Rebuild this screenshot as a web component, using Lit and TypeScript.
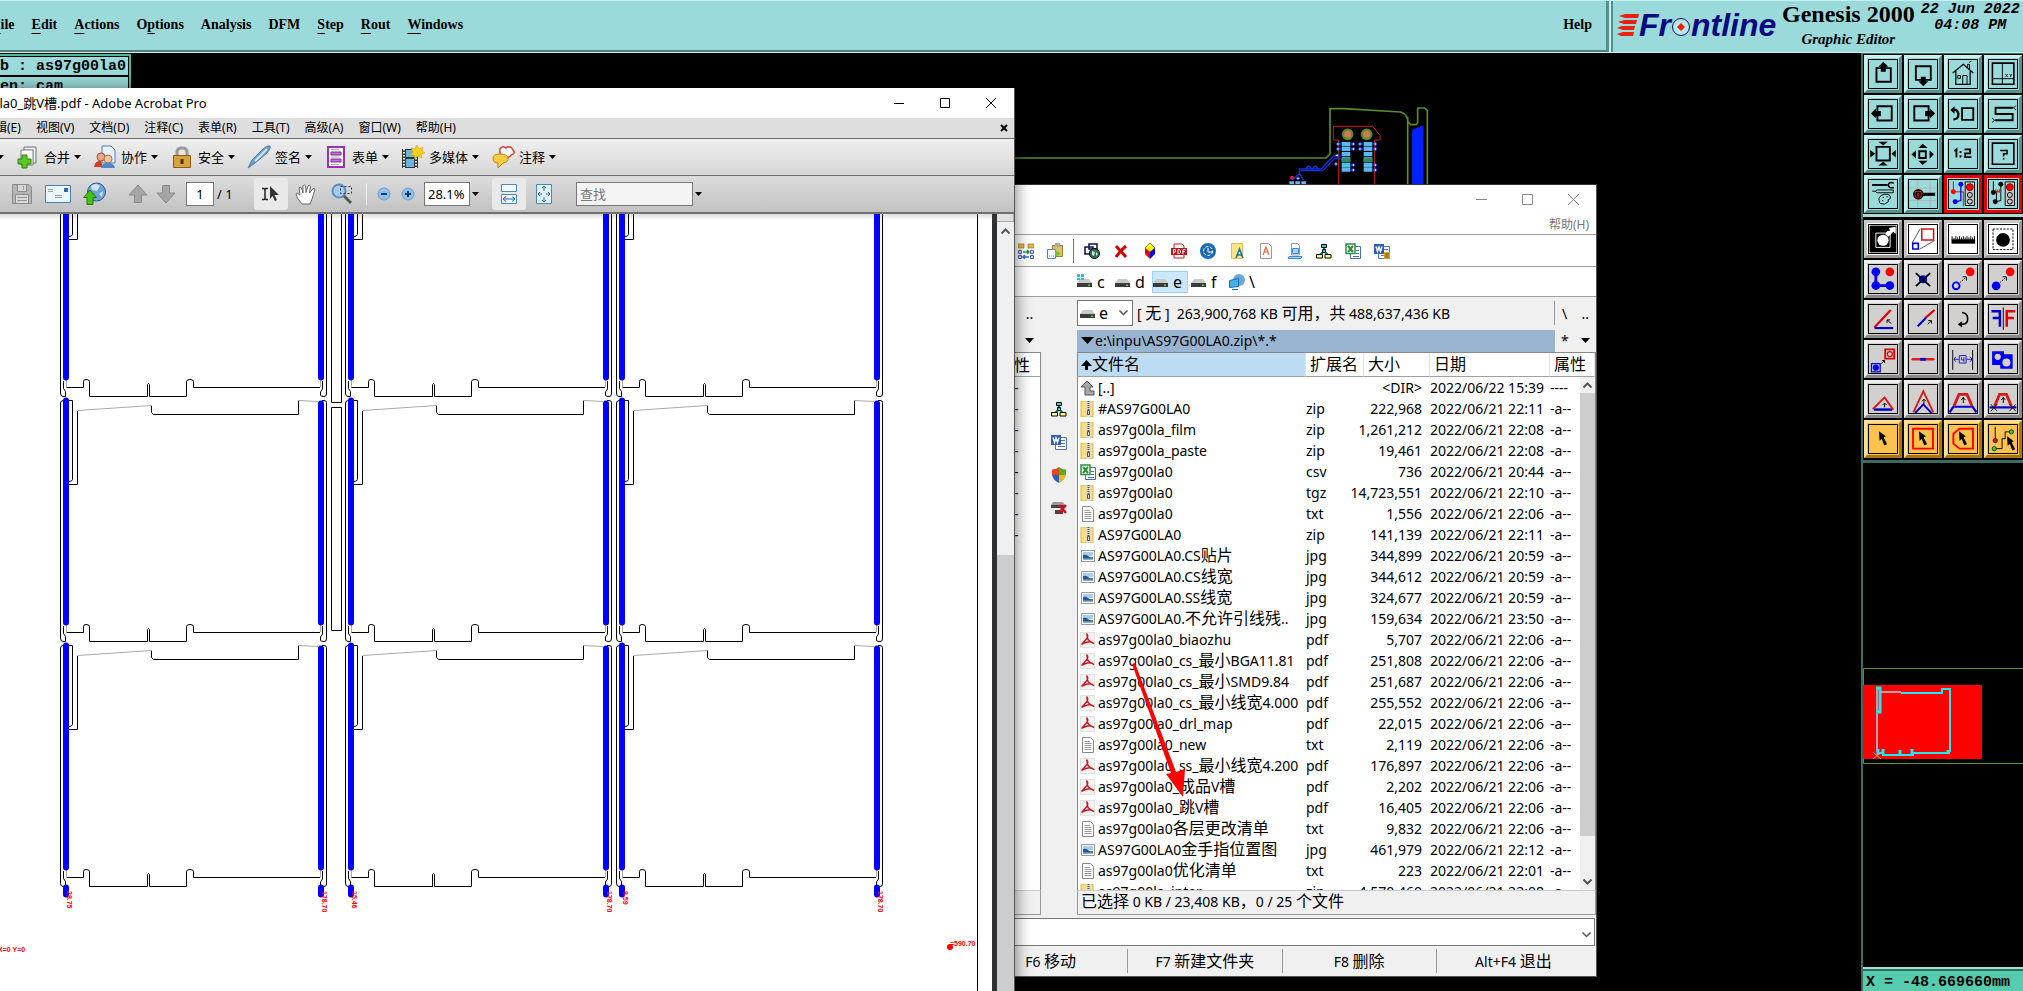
import { LitElement, html, svg, css } from "lit";
import { customElement } from "lit/decorators.js";

/** Wraps runs of Chinese characters so that they can be set a size larger than the Latin text. */
const han = (s: string) =>
  s.split(/([\u3000-\u9fff\uff00-\uffef]+)/).map((p, i) => (i % 2 ? html`<span class="han">${p}</span>` : p));

const caret = html`<svg class="caret" width="7" height="4" viewBox="0 0 7 4"><path d="M0 0H7L3.500 4Z" fill="#000" /></svg>`;

/* ---------- Genesis tool palette ---------- */

const cursor = (x: number, y: number) =>
  svg`<path transform="translate(${x} ${y})" fill="#000" stroke="none" d="M0 0L22 16L15 20L26 42L17 46L9 25L2 31Z"/>`;

const viewTools: [string, unknown][] = [
  ["Pan up", svg`<path stroke-width="6" d="M24 26H70V70H24Z"/><path fill="#000" stroke="none" d="M46 6L62 22H54V38H38V22H30Z"/>`],
  ["Pan down", svg`<path stroke-width="6" d="M22 20H70V64H22Z"/><path fill="#000" stroke="none" d="M46 84L62 68H54V54H38V68H30Z"/>`],
  ["Home view", svg`<path stroke-width="4" d="M12 42L46 14L78 42M22 36V78H68V36"/><path stroke-width="3" d="M60 24V14H66V30M64 8L72 4M44 78V50H58V78M28 50H37V59H28Z"/>`],
  ["Coordinates", svg`<path stroke-width="5" d="M11 10H80V78H11Z"/><path stroke-width="3" d="M43 10V78M11 60H80"/><path stroke-width="2.500" d="M53 45L60 55M60 45L53 55M66 45L70 50L74 45M70 50V55"/>`],
  ["Pan left", svg`<path stroke-width="6" d="M27 20H73V66H27Z"/><path fill="#000" stroke="none" d="M6 43L22 27V35H38V52H22V59Z"/>`],
  ["Pan right", svg`<path stroke-width="6" d="M17 20H63V66H17Z"/><path fill="#000" stroke="none" d="M84 43L68 27V35H52V52H68V59Z"/>`],
  ["Previous view", svg`<path stroke-width="6" d="M42 26H78V64H42Z"/><path stroke-width="7" d="M10 32H22Q32 40 30 50Q28 62 14 62"/><path fill="#000" stroke="none" d="M4 32L18 20V44Z"/>`],
  ["Serpentine", svg`<path stroke-width="6" d="M78 25H21V45H76V65H20"/><path stroke-width="3" d="M80 25L86 18M80 25L86 32M18 65L10 58M18 65L10 72"/>`],
  ["Zoom in", svg`<path stroke-width="6" d="M24 22H67V66H24Z"/><path fill="#000" stroke="none" d="M46 18L30 6H60ZM46 70L30 82H60ZM20 44L4 32V56ZM72 44L86 32V56Z"/>`],
  ["Zoom out", svg`<path stroke-width="6" d="M33 36H54V58H33Z"/><path fill="#000" stroke="none" d="M44 12L60 26H30ZM44 80L60 67H30ZM8 46L22 34V60ZM80 46L66 34V60Z"/>`],
  ["Scale one to two", svg`<path stroke-width="6" d="M24 56V30L17 35M37 35V42M37 49V56M50 30H68V43H52V55H72"/>`],
  ["Help", svg`<path stroke-width="5" d="M11 10H80V78H11Z"/><path stroke-width="5" d="M36 34H58V44H47V53M47 58V63"/>`],
  ["Setup", svg`<path stroke-width="6" d="M10 16H60"/><path stroke-width="5" d="M80 10Q64 4 62 16Q64 28 80 24"/><path stroke-width="3" d="M10 36H20L26 32H78V41H26L20 36M32 66Q30 50 50 46Q72 44 68 60Q58 62 62 70Q50 82 38 76Q30 72 34 66M44 56H48M56 54H60M42 66H46"/>`],
  ["Measure", svg`<path stroke="#c89aa0" stroke-width="2" d="M28 2V88M68 2V88M2 26H88M2 66H88"/><circle cx="30" cy="46" r="17" fill="#000" stroke="none"/><path stroke-width="10" d="M40 46H84"/><path stroke="#e02020" stroke-width="3" d="M20 37H39V55H20ZM27 44H32V49H27Z"/>`],
  ["Net check", svg`<path stroke="#e00000" stroke-width="3" d="M14 4V38H46V84"/><path stroke="#0000e0" stroke-width="4" d="M38 14V66L20 70"/><circle cx="14" cy="38" r="8" fill="#f00" stroke="none"/><circle cx="38" cy="14" r="8" fill="#00f" stroke="none"/><circle cx="20" cy="70" r="8" fill="#00f" stroke="none"/><path stroke-width="3" fill="#c8c8c8" d="M52 6H82V82H52Z"/><circle cx="67" cy="23" r="11" fill="#f00" stroke="#700" stroke-width="3"/><circle cx="67" cy="48" r="8" stroke-width="3"/><circle cx="67" cy="69" r="8" stroke-width="3"/>`],
  ["Net highlight", svg`<path stroke-width="3" d="M14 4V38H24V66M38 14V66L20 70"/><path stroke="#e00000" stroke-width="3" d="M20 38H34M22 30V40M28 30V40M34 30V40"/><circle cx="14" cy="40" r="8" fill="#000" stroke="none"/><circle cx="38" cy="14" r="8" fill="#000" stroke="none"/><circle cx="20" cy="70" r="8" fill="#000" stroke="none"/><path stroke-width="3" fill="#c8c8c8" d="M52 6H82V82H52Z"/><circle cx="67" cy="23" r="11" fill="#f00" stroke="#700" stroke-width="3"/><circle cx="67" cy="48" r="8" stroke-width="3"/><circle cx="67" cy="69" r="8" stroke-width="3"/>`],
];

const editTools: [string, unknown][] = [
  ["Feature inspect", svg`<path fill="#000" stroke="none" d="M2 2H88V88H2Z"/><path stroke="#fff" stroke-width="3" d="M22 26H68V72H22Z"/><circle cx="45" cy="49" r="18" fill="#fff" stroke="none"/><path fill="#fff" stroke="none" d="M58 20L68 18L64 10L86 6V28L78 22L62 38L52 30Z"/>`],
  ["Zoom window", svg`<path stroke-width="2" d="M10 58L36 12M34 78L82 50"/><path stroke="#c81818" stroke-width="5" d="M41 13H79V48H41Z"/><path stroke="#0000e0" stroke-width="5" d="M12 59H30V77H12Z"/>`],
  ["Ruler", svg`<path fill="#000" stroke="none" d="M8 46H84V60H8Z"/><path stroke-width="3" d="M10 36V48M16 42V48M22 36V48M28 40V48M34 36V48M40 40V48M46 36V48M52 40V48M58 36V48M64 40V48M70 36V48M76 40V48M82 36V48"/>`],
  ["Pad select", svg`<path stroke-width="3" stroke-dasharray="7 4" d="M13 13H77V79H13Z"/><circle cx="45" cy="48" r="22" fill="#000" stroke="none"/>`],
  ["Connect pads", svg`<g stroke="none" fill="#0000f0"><circle cx="22" cy="22" r="14"/><circle cx="22" cy="66" r="14"/><circle cx="67" cy="66" r="14"/><circle cx="67" cy="22" r="14" fill="#f00"/></g><path stroke="#0000f0" stroke-width="9" d="M22 22V66H67"/>`],
  ["Delete feature", svg`<circle cx="45" cy="46" r="13" fill="#0000f0" stroke="none"/><path stroke-width="6" d="M22 26L68 68M68 26L22 68"/>`],
  ["Move pad", svg`<circle cx="23" cy="67" r="11" stroke="#0000f0" stroke-width="6"/><circle cx="68" cy="22" r="14" fill="#f00" stroke="none"/><path stroke-width="3" stroke-dasharray="5 3" d="M36 56L54 40"/><path stroke-width="3" d="M44 38H56V50"/>`],
  ["Copy pad", svg`<circle cx="23" cy="67" r="14" fill="#0000f0" stroke="none"/><circle cx="68" cy="22" r="14" fill="#f00" stroke="none"/><path stroke-width="3" stroke-dasharray="5 3" d="M36 56L54 40"/><path stroke-width="3" d="M44 38H56V50"/>`],
  ["Rotate line", svg`<path stroke="#e00000" stroke-width="7" d="M17 72L70 16"/><path stroke="#0000d0" stroke-width="7" d="M18 74H78"/><path stroke-width="3" d="M72 60L58 48M58 58V48H68"/>`],
  ["Extend line", svg`<path stroke="#e00000" stroke-width="7" d="M52 42L82 16"/><path stroke="#0000d0" stroke-width="7" d="M28 68L54 42"/><path stroke-width="3" d="M60 62L70 52M62 50H72V60"/>`],
  ["Rotate", svg`<path stroke-width="5" d="M42 24Q60 26 60 44Q60 62 42 62H34"/><path fill="#000" stroke="none" d="M28 62L42 52V72Z"/>`],
  ["Mirror", svg`<path stroke-width="3" d="M46 8V80"/><path stroke="#0000d0" stroke-width="8" d="M8 20H35V70M35 42H12"/><path stroke="#e00000" stroke-width="8" d="M84 20H57V70M57 42H80"/>`],
  ["Change symbol", svg`<path stroke="#e00000" stroke-width="6" d="M52 14H81V44H52Z"/><circle cx="67" cy="29" r="8" stroke="#e00000" stroke-width="4"/><path stroke="#0000d0" stroke-width="4" d="M8 60H36V86H8Z"/><circle cx="22" cy="73" r="10" fill="#0000f0" stroke="none"/><path stroke-width="3" d="M40 60L50 50M42 50H50V58"/>`],
  ["Merge line", svg`<path stroke="#e02020" stroke-width="8" stroke-linecap="round" d="M12 46H78"/><path stroke="#0000d0" stroke-width="9" d="M36 46H54"/>`],
  ["Spacing", svg`<path stroke-width="3" d="M12 16V80M76 16V80"/><path stroke="#1818c8" stroke-width="3" d="M16 46H32M56 46H74M22 38L16 46L22 54M68 38L74 46L68 54M33 34H55V58H33ZM40 39V48H48M48 39V54"/>`],
  ["Contour merge", svg`<path fill="#0000f0" stroke="none" d="M10 20H48V30H76V76H36V64H10Z"/><circle cx="28" cy="38" r="10" fill="#d4d0d0" stroke="none"/><circle cx="56" cy="56" r="13" fill="#d4d0d0" stroke="none"/>`],
  ["Taper one", svg`<path stroke="#0000d0" stroke-width="8" d="M16 79H74"/><path stroke="#d81818" stroke-width="6" d="M12 78L50 40L78 80"/><path stroke-width="3" d="M50 72V58M44 64L50 58L56 64"/>`],
  ["Taper two", svg`<path stroke="#d81818" stroke-width="6" d="M14 88L46 20L78 88"/><path stroke="#0000d0" stroke-width="6" d="M20 90L46 62L72 90"/><path stroke-width="3" d="M48 62V46M42 52L48 46L54 52"/>`],
  ["Trapezoid", svg`<path stroke="#0000d0" stroke-width="7" d="M2 88L14 70H76L88 88"/><path stroke="#d81818" stroke-width="9" d="M16 68L32 30H58L74 68"/><path stroke-width="3" d="M46 58V40M40 48L46 40L52 48"/>`],
  ["Trapezoid cut", svg`<path stroke="#0000d0" stroke-width="7" d="M2 72H88"/><path stroke="#d81818" stroke-width="9" d="M18 68L34 30H56L72 68"/><path stroke-width="3" d="M46 58V40M40 48L46 40L52 48M6 62L26 84M26 62L6 84M66 62L86 84M86 62L66 84"/>`],
  ["Select", cursor(32, 20)],
  ["Select in frame", svg`<path stroke="#f00" stroke-width="6" d="M13 12H77V76H13Z"/>${cursor(32, 20)}`],
  ["Select in polygon", svg`<path stroke="#f00" stroke-width="6" d="M34 12H77V76H34L14 60V28Z"/>${cursor(32, 20)}`],
  ["Select net", svg`<path stroke-width="3" d="M20 6V44M18 76H42V44H52V22H70"/><g stroke-width="2"><circle cx="20" cy="50" r="7" fill="#d01010"/><circle cx="17" cy="76" r="7" fill="#20d020"/><circle cx="72" cy="22" r="7" fill="#20d020"/></g>${cursor(58, 36)}`],
];

/* ---------- Shared 16px glyphs ---------- */

const tree = svg`<path d="M8 4V8L4 12M8 8L12 12" stroke="#00806a" stroke-width="2"/><path fill="#30d0d0" stroke="#000" d="M5.500 1.500H10.500V4.500H5.500ZM6.500 6.500H9.500V9.500H6.500Z"/><path fill="#ffff80" stroke="#000" d="M.500 11.500H6.500V15H.500ZM9 11.500H15V15H9Z"/>`;
const word = svg`<path fill="#fff" stroke="#4a78c0" d="M7.500 3.500H15.500V15.500H4.500V11"/><path stroke="#4a78c0" d="M10 6.500H14M10 9.500H14M7 12.500H14"/><path fill="#2b5eb4" d="M0 1H10V11H0Z"/><path stroke="#fff" stroke-width="1.400" d="M2 3.500L3.500 8.500L5 4L6.500 8.500L8 3.500"/>`;
const excel = svg`<path fill="#fff" stroke="#4070b0" d="M8.500 3.500H15.500V15.500H5.500V11"/><path stroke="#4070b0" d="M11 7.500H14M11 10.500H14M8 13.500H14"/><path fill="#fff" stroke="#2e8b40" stroke-width="1.500" d="M1 1H10V10.500H1Z"/><path stroke="#2e8b40" stroke-width="2" d="M3 3L8 9M8 3L3 9"/>`;
const drive = svg`<path fill="#c9c9c9" d="M3 5H12L15 9H0Z"/><path fill="#3b3b3b" d="M0 9H15V13H0Z"/><path fill="#3fe04a" d="M11 10.500H13V12H11Z"/>`;

const fileIcons: Record<string, unknown> = {
  up: svg`<path d="M7 1L13 7H10V11H14V15H5V7H1Z" fill="#a8a8a8" stroke="#555"/>`,
  zip: svg`<path d="M1 0H13V16H1Z" fill="#f7dd85"/><path d="M1 0H13V16H1Z" stroke="#d9b64c"/><path d="M6.500 0H10.500V16H6.500Z" fill="#d8d8d8"/><path d="M8.500 0V9" stroke="#555" stroke-width="2" stroke-dasharray="1 1"/><path d="M7.500 9.500H9.500V13.500H7.500Z" stroke="#555"/>`,
  xls: excel,
  txt: svg`<path d="M2.500 .500H10.500L13.500 3.500V15.500H2.500Z" fill="#fff" stroke="#8a8a8a"/><path d="M4.500 4.500H10M4.500 6.500H11.500M4.500 8.500H11.500M4.500 10.500H11.500M4.500 12.500H11.500" stroke="#999"/>`,
  jpg: svg`<path d="M1.500 2.500H14.500V13.500H1.500Z" fill="#fff" stroke="#999"/><path d="M3 4H13V8H3Z" fill="#a8ccf0"/><path d="M3 12V7Q6 6 8 8T13 9V12Z" fill="#27598c"/><path d="M3 10.500H13V12H3Z" fill="#88b0d8"/>`,
  pdf: svg`<path d="M.500 .500H14.500V15.500H.500Z" fill="#f4f2f2" stroke="#e3e0e0"/><path d="M6.500 1.500Q9 4 6.500 7T1.500 12.500Q4 11 7.500 10T14 11.500Q11 10 9 8.500T7 2" stroke="#c8141c" stroke-width="1.400"/>`,
};

const glyph = (g: unknown, size = 16) =>
  html`<svg class="glyph" width=${size} height=${size} viewBox="0 0 16 16" fill="none">${g}</svg>`;

/* ---------- Data ---------- */

const files: [string, string, string, string, string, string][] = [
  ["up", "[..]", "", "<DIR>", "2022/06/22 15:39", "----"],
  ["zip", "#AS97G00LA0", "zip", "222,968", "2022/06/21 22:11", "-a--"],
  ["zip", "as97g00la_film", "zip", "1,261,212", "2022/06/21 22:08", "-a--"],
  ["zip", "as97g00la_paste", "zip", "19,461", "2022/06/21 22:08", "-a--"],
  ["xls", "as97g00la0", "csv", "736", "2022/06/21 20:44", "-a--"],
  ["zip", "as97g00la0", "tgz", "14,723,551", "2022/06/21 22:10", "-a--"],
  ["txt", "as97g00la0", "txt", "1,556", "2022/06/21 22:06", "-a--"],
  ["zip", "AS97G00LA0", "zip", "141,139", "2022/06/21 22:11", "-a--"],
  ["jpg", "AS97G00LA0.CS贴片", "jpg", "344,899", "2022/06/21 20:59", "-a--"],
  ["jpg", "AS97G00LA0.CS线宽", "jpg", "344,612", "2022/06/21 20:59", "-a--"],
  ["jpg", "AS97G00LA0.SS线宽", "jpg", "324,677", "2022/06/21 20:59", "-a--"],
  ["jpg", "AS97G00LA0.不允许引线残..", "jpg", "159,634", "2022/06/21 23:50", "-a--"],
  ["pdf", "as97g00la0_biaozhu", "pdf", "5,707", "2022/06/21 22:06", "-a--"],
  ["pdf", "as97g00la0_cs_最小BGA11.81", "pdf", "251,808", "2022/06/21 22:06", "-a--"],
  ["pdf", "as97g00la0_cs_最小SMD9.84", "pdf", "251,687", "2022/06/21 22:06", "-a--"],
  ["pdf", "as97g00la0_cs_最小线宽4.000", "pdf", "255,552", "2022/06/21 22:06", "-a--"],
  ["pdf", "as97g00la0_drl_map", "pdf", "22,015", "2022/06/21 22:06", "-a--"],
  ["txt", "as97g00la0_new", "txt", "2,119", "2022/06/21 22:06", "-a--"],
  ["pdf", "as97g00la0_ss_最小线宽4.200", "pdf", "176,897", "2022/06/21 22:06", "-a--"],
  ["pdf", "as97g00la0_成品V槽", "pdf", "2,202", "2022/06/21 22:06", "-a--"],
  ["pdf", "as97g00la0_跳V槽", "pdf", "16,405", "2022/06/21 22:06", "-a--"],
  ["txt", "as97g00la0各层更改清单", "txt", "9,832", "2022/06/21 22:06", "-a--"],
  ["jpg", "AS97G00LA0金手指位置图", "jpg", "461,979", "2022/06/21 22:12", "-a--"],
  ["txt", "as97g00la0优化清单", "txt", "223", "2022/06/21 22:01", "-a--"],
  ["zip", "as97g00la_inter", "zip", "4,570,460", "2022/06/21 22:08", "-a--"],
];

/* ---------- Graphic editor: side palette ---------- */

@customElement("tool-palette")
export class ToolPalette extends LitElement {
  static styles = css`
    :host { display: flex; flex-direction: column; min-height: 0; border-left: 2px solid #3d6b64; background: #000; }
    .grid { display: grid; grid-template-columns: repeat(4, 38px); gap: 2px; padding: 1px 0 1px 1px; border-top: 1px solid #3d6b64; }
    .second { padding-top: 3px; padding-bottom: 2px; border-top: 3px solid #a9dcd6; border-bottom: 3px solid #3d6b64; }
    .tool { box-sizing: border-box; width: 38px; height: 38px; margin: 0; padding: 0; display: grid; place-items: center;
      border: 3px solid; border-color: #c4f2f0 #55908e #55908e #c4f2f0; background: #9adada; }
    .tool svg { display: block; width: 28px; height: 28px; border: 1px solid #000; }
    .tool.alert { border-color: #e60000; }
    .grey { background: #d2cfcf; border-color: #eee #8a8888 #8a8888 #eee; }
    .white { background: #fff; border-color: #c8c6c6 #9a9898 #9a9898 #c8c6c6; }
    .orange { background: #fdc14e; border-color: #ffdf9a #a87418 #a87418 #ffdf9a; }
    .map { flex: 1; min-height: 0; position: relative; }
    .map svg { position: absolute; left: 0; top: 205px; }
    .coord { box-sizing: border-box; height: 24px; padding: 4px 0 0 3px; border-top: 2px solid #a9dcd6;
      background: #55ccad; box-shadow: inset 0 2px #2f6f60; font: bold 15px/20px "Liberation Mono", monospace; white-space: pre; }
  `;
  private tool(name: string, icon: unknown, kind: string) {
    return html`<button class="tool ${kind}" aria-label=${name}>
      <svg viewBox="0 0 90 90" fill="none" stroke="#000">${icon}</svg>
    </button>`;
  }
  render() {
    return html`
      <div class="grid">${viewTools.map(([n, i], k) => this.tool(n, i, k > 13 ? "alert" : ""))}</div>
      <div class="grid second">${editTools.map(([n, i], k) => this.tool(n, i, k < 4 ? "white" : k < 20 ? "grey" : "orange"))}</div>
      <div class="map">
        <svg width="160" height="96" viewBox="0 0 160 96" fill="none">
          <path d="M160 .500H.500V95.500H160" stroke="#5a8c2a" />
          <path d="M0 17H119V91H0Z" fill="#f00" />
          <path d="M14 21V84" stroke="#a8a8a8" stroke-width="2" />
          <path d="M18 24H38" stroke="#b8a0a0" stroke-width="2" />
          <path d="M38 25H79V21H87V84M87 85H50V87H20V85H14" stroke="#20e8f0" stroke-width="2" />
          <path d="M13 20H17V44H13M17 24V44" stroke="#20e8f0" stroke-width="3" />
          <path d="M37 87V82M49 86V81M20 86V81M85 82V86M15 81V87" stroke="#20e8f0" stroke-width="3" />
          <path d="M10 91L18 84M10 84L18 91" stroke="#c8a0a0" />
        </svg>
      </div>
      <div class="coord">X = -48.669660mm</div>
    `;
  }
}

/* ---------- File manager window ---------- */

@customElement("file-manager")
export class FileManager extends LitElement {
  static styles = css`
    :host { display: flex; flex-direction: column; box-sizing: border-box; overflow: hidden; background: #f0f0f0; color: #000;
      font: 14px/21px "Noto Sans", "Noto Sans CJK SC", sans-serif; border-right: 1px solid #555; border-bottom: 1px solid #555; border-top: 1px solid #333; }
    .han { font-size: 16px; }
    button { font: inherit; color: inherit; margin: 0; padding: 0; border: 0; background: none; }
    .glyph { display: block; flex: none; }
    .title { display: flex; justify-content: flex-end; height: 28px; background: #fff; }
    .title button { width: 46px; display: grid; place-items: center; }
    .menu { display: flex; justify-content: flex-end; height: 21px; padding-right: 7px; background: #fff; border-bottom: 1px solid #a0a0a0; font-size: 12px; line-height: 24px; color: #777; }
    .tools { display: flex; align-items: center; gap: 13px; height: 31px; padding-left: 4px; background: #fff; border-bottom: 1px solid #a0a0a0; }
    .rule { width: 1px; height: 24px; margin: 0 -3px; background: #777; }
    .drives { display: flex; align-items: center; height: 29px; padding-left: 62px; background: #fff; border-bottom: 1px solid #a0a0a0; gap: 2px; font-size: 16px; }
    .drives button { box-sizing: border-box; height: 22px; width: 36px; display: flex; align-items: center; gap: 4px; border: 1px solid transparent; line-height: 20px; }
    .drives .on { background: #cce8ff; border-color: #99d1ff; }
    .body { flex: 1; min-height: 0; display: grid; grid-template-columns: 27px 36px 1fr; }
    .left, .right { display: flex; flex-direction: column; min-height: 0; min-width: 0; }
    .space { height: 32px; display: flex; align-items: center; gap: 4px; }
    .left .space, .left .path { justify-content: center; padding-left: 4px; }
    .path { height: 23px; display: flex; align-items: center; }
    .list { flex: 1; min-height: 0; position: relative; overflow: hidden; background: #fff; border: 1px solid #888; border-bottom: 0; }
    .left .list { border-left: 0; }
    .cutHead { height: 23px; border-bottom: 1px solid #a0a0a0; line-height: 24px; }
    .dashes { white-space: pre; }
    .dashes div { height: 21px; }
    .status { height: 25px; box-sizing: border-box; border: 1px solid #999; border-top-color: #ccc; padding-left: 3px; line-height: 21px; margin-bottom: 3px; white-space: nowrap; }
    .left .status { border-left: 0; }
    .mid { display: flex; flex-direction: column; align-items: center; gap: 17px; padding-top: 104px; }
    .combo { position: relative; display: flex; align-items: center; }
    .combo select { appearance: none; box-sizing: border-box; width: 56px; height: 26px; padding: 0 0 0 21px; border: 1px solid #777; border-radius: 0; background: #fff; font: inherit; font-size: 16px; color: #000; }
    .combo .glyph { position: absolute; left: 3px; }
    .combo .chev { position: absolute; right: 5px; }
    .free { flex: 1; white-space: nowrap; }
    .side { width: 41px; display: flex; justify-content: space-around; align-items: center; height: 24px; }
    .space .side { border-left: 1px solid #999; }
    .current { flex: 1; height: 22px; display: flex; align-items: center; gap: 1px; padding-left: 4px; background: #99b4d1; }
    table { border-collapse: separate; border-spacing: 0; table-layout: fixed; width: 100%; }
    th { height: 23px; padding: 0 0 0 4px; border-bottom: 1px solid #a0a0a0; border-right: 1px solid #e2e2e2; text-align: left; font-weight: normal; font-size: 16px; line-height: 23px; }
    th:first-child { background: #bcdcf4; padding-left: 3px; }
    td { height: 21px; padding: 0; white-space: nowrap; }
    .name { display: flex; align-items: center; gap: 2px; padding-left: 2px; height: 21px; }
    .num { display: flex; justify-content: flex-end; padding-right: 8px; }
    .cName { width: 228px; } .cExt { width: 58px; } .cSize { width: 66px; } .cDate { width: 120px; }
    .scroll { position: absolute; right: 0; top: 24px; bottom: 0; width: 15px; display: flex; flex-direction: column; background: #f0f0f0; }
    .scroll svg { display: block; margin: 5px auto; }
    .thumb { flex: 1; margin-bottom: 54px; background: #cdcdcd; }
    .scroll .down { position: absolute; bottom: 0; left: 3px; }
    .command { display: flex; align-items: center; box-sizing: border-box; height: 28px; margin-right: 1px; background: #fff; border: 1px solid #777; border-left: 0; }
    .command input { flex: 1; min-width: 0; border: 0; outline: 0; background: none; font: inherit; }
    .command button { width: 16px; }
    .keys { display: flex; align-items: center; height: 30px; margin-left: -40px; padding-right: 6px; }
    .keys button { flex: 1; height: 24px; border-right: 1px solid #999; white-space: nowrap; }
    .keys button:last-child { border: 0; }
  `;
  render() {
    const chev = html`<svg class="chev" width="9" height="6" viewBox="0 0 9 6" fill="none"><path d="M.500 .500L4.500 4.500L8.500 .500" stroke="#555" stroke-width="1.500" /></svg>`;
    return html`
      <div class="title">
        <button aria-label="Minimise"><svg width="11" height="11"><path d="M0 5.500H11" stroke="#888" /></svg></button>
        <button aria-label="Maximise"><svg width="11" height="11" fill="none"><path d="M.500 .500H10.500V10.500H.500Z" stroke="#888" /></svg></button>
        <button aria-label="Close"><svg width="11" height="11"><path d="M0 0L11 11M11 0L0 11" stroke="#888" /></svg></button>
      </div>
      <div class="menu"><button>帮助(H)</button></div>
      <div class="tools">
        ${glyph(svg`<path fill="#e8b83a" stroke="#8a6a10" stroke-width=".600" d="M0 1H6V5H0ZM10 1H16V5H10Z"/><path fill="#c8d0f8" stroke="#5060b0" d="M.500 7.500H3.500V10.500H.500ZM12.500 7.500H15.500V10.500H12.500ZM.500 12.500H3.500V15.500H.500ZM12.500 12.500H15.500V15.500H12.500Z"/><path stroke="#2a9a2a" stroke-width="1.500" d="M5 9H11M9 7L11 9L9 11"/><path stroke="#3070c0" stroke-width="1.500" d="M5 14H11M7 12L5 14L7 16"/>`)}
        ${glyph(svg`<path fill="#e4c060" stroke="#a08030" d="M5.500 2.500H15.500V13.500H5.500Z"/><path fill="#aaa" d="M8 0H13V4H8Z"/><path fill="#fff" stroke="#6878c0" d="M.500 6.500H8.500V15.500H.500Z"/><path d="M2 13H7" stroke="#6878c0" stroke-dasharray="1 1"/><path fill="#70c030" d="M8 7L14 10.500L8 14Z"/>`)}
        <span class="rule"></span>
        ${glyph(svg`<path fill="#fff" stroke="#101050" stroke-width="1.500" d="M5 1H13V6H5ZM1 4H9V11H1Z"/><circle cx="10.500" cy="10.500" r="5" fill="#207858" stroke="#000"/><path fill="#ddd" d="M8 8L11 9L10 13L8 12ZM12 9L14 11L12 13Z"/>`)}
        ${glyph(svg`<path stroke="#d40000" stroke-width="3" d="M3 3L13 14M13 3Q7 8 3 14"/>`)}
        ${glyph(svg`<path fill="#ffff00" stroke="#222" stroke-width=".500" d="M8 0L13 5L8 9L3 5Z"/><path fill="#f00000" d="M3 5L8 9V16L3 11Z"/><path fill="#0000e0" d="M13 5L8 9V16L13 11Z"/>`)}
        ${glyph(svg`<path fill="#fff" stroke="#c02020" d="M3 1H11L13 3V15H3Z"/><path fill="#c41418" d="M0 5H16V12H0Z"/><path stroke="#fff" d="M2.500 11V6.500H4.500V9H2.500M7 6.500V10.500H8.500L9.500 9.500V7.500L8.500 6.500ZM12 11V6.500H14.500M12 8.500H14"/>`)}
        ${glyph(svg`<circle cx="8" cy="8" r="8" fill="#1a6db4"/><circle cx="8" cy="8" r="4.500" stroke="#fff" stroke-dasharray="3 1.500"/><path stroke="#fff" d="M8 5V9H13"/>`)}
        ${glyph(svg`<path fill="#fbe48c" stroke="#e0bf50" d="M2.500 .500H13.500V15.500H2.500Z"/><path stroke="#20789a" stroke-width="1.600" d="M7 15L10.500 6L14 15M8 12H13"/>`)}
        ${glyph(svg`<path fill="#fff" stroke="#999" d="M2.500 .500H10.500L13.500 3.500V15.500H2.500Z"/><path stroke="#e06840" stroke-width="1.200" d="M5 12L8 4L11 12M6 9H10"/>`)}
        ${glyph(svg`<path fill="#fff" stroke="#999" d="M4.500 .500H10.500L12.500 2.500V12H4.500Z"/><path fill="#a8d0ec" stroke="#3a90c8" d="M5.500 5.500H11.500V10.500H5.500ZM2 13.500H15L14 15.500H1Z"/>`)}
        ${glyph(tree)} ${glyph(excel)}
        ${glyph(svg`${word}<path fill="#d8a030" d="M10 9H16V16H10Z"/><path stroke="#7a5a10" d="M12 10V15M14 10V15"/>`)}
      </div>
      <div class="drives">
        <button>${glyph(svg`${drive}<path fill="#30b8f0" d="M0 0H3V3H0ZM4 0H7V3H4ZM0 4H3V6H0ZM4 4H7V6H4Z"/>`)}c</button>
        <button>${glyph(drive)}d</button>
        <button class="on">${glyph(drive)}e</button>
        <button>${glyph(drive)}f</button>
        <button aria-label="Network">${glyph(svg`<circle cx="10" cy="6" r="6" fill="#6aa8dc"/><path fill="#48b0ea" stroke="#1a6ab0" d="M.500 6.500L9.500 4.500V12.500L.500 13.500Z"/><path stroke="#1a6ab0" d="M3 15.500H9"/>`)}\\</button>
      </div>
      <div class="body">
        <div class="left">
          <div class="space">..</div>
          <div class="path"><svg width="9" height="5"><path d="M0 0H9L4.500 5Z" /></svg></div>
          <div class="list">
            <div class="cutHead">${han("性")}</div>
            <div class="dashes">${files.slice(0, 8).map(() => html`<div>-</div>`)}</div>
          </div>
          <div class="status"></div>
        </div>
        <div class="mid">
          ${glyph(tree)} ${glyph(word)}
          ${glyph(svg`<path fill="#e04a20" d="M8 0V8H1Q1 4 1 2.500Q5 2.500 8 0Z"/><path fill="#60a820" d="M8 0V8H15Q15 4 15 2.500Q11 2.500 8 0Z"/><path fill="#2a60b8" d="M8 16V8H1Q2 13 8 16Z"/><path fill="#f0b820" d="M8 16V8H15Q14 13 8 16Z"/>`)}
          ${glyph(svg`<path fill="#999" d="M2 2H12L14 5H0Z"/><path fill="#444" d="M0 5H14V8H0ZM4 10H12V14H4Z"/><path stroke="#d01020" stroke-width="2.500" d="M8 5L15 13M15 5L8 13"/>`)}
        </div>
        <div class="right">
          <div class="space">
            <label class="combo">${glyph(drive)}<select aria-label="Drive"><option>e</option></select>${chev}</label>
            <span class="free">[ ${han("无")} ]&nbsp; 263,900,768 KB ${han("可用，共")} 488,637,436 KB</span>
            <span class="side"><span>\\</span><span>..</span></span>
          </div>
          <div class="path">
            <span class="current"><svg width="13" height="7"><path d="M0 0H13L6.500 7Z" /></svg>e:\\inpu\\AS97G00LA0.zip\\*.*</span>
            <span class="side"><span>*</span><svg width="9" height="5"><path d="M0 0H9L4.500 5Z" /></svg></span>
          </div>
          <div class="list">
            <table>
              <colgroup><col class="cName" /><col class="cExt" /><col class="cSize" /><col class="cDate" /><col /></colgroup>
              <thead>
                <tr>
                  <th><svg width="11" height="10" viewBox="0 0 11 10"><path d="M5.500 0L11 6H7V10H4V6H0Z" /></svg>文件名</th>
                  <th>扩展名</th><th>大小</th><th>日期</th><th>属性</th>
                </tr>
              </thead>
              <tbody>
                ${files.map(
                  ([icon, name, ext, size, date, attr]) => html`<tr>
                    <td><div class="name">${glyph(fileIcons[icon])}<span>${han(name)}</span></div></td>
                    <td>${ext}</td><td><div class="num">${size}</div></td><td>${date}</td><td>${attr}</td>
                  </tr>`
                )}
              </tbody>
            </table>
            <div class="scroll">
              <svg width="9" height="6" fill="none"><path d="M.500 5.500L4.500 1.500L8.500 5.500" stroke="#555" stroke-width="2" /></svg>
              <div class="thumb"></div>
              <svg class="down" width="9" height="6" fill="none"><path d="M.500 .500L4.500 4.500L8.500 .500" stroke="#555" stroke-width="2" /></svg>
            </div>
          </div>
          <div class="status">${han("已选择")} 0 KB / 23,408 KB${han("，")}0 / 25 ${han("个文件")}</div>
        </div>
      </div>
      <div class="command"><input aria-label="Command line" /><button aria-label="History">${chev}</button></div>
      <div class="keys">
        <button>F6 ${han("移动")}</button><button>F7 ${han("新建文件夹")}</button><button>F8 ${han("删除")}</button><button>Alt+F4 ${han("退出")}</button>
      </div>
    `;
  }
}

/* ---------- PDF viewer window ---------- */

const columns = [60, 345, 616];
const rows = [-59, 186, 431];

const board = (x: number, y: number) => svg`<g transform="translate(${x} ${y})">
  <path class="ink" d="M12.500 .500H3.500Q.500 .500 .500 3V238Q.500 241.500 3 241.500H5.500V236.500L3.500 233.500V226
    M6.500 232.500H23.500V226.500Q23.500 224.500 26 224.500Q29.500 224.500 29.500 226.500V241.500H87.500V229.500Q88.500 227.500 89.500 229.500V241.500H126.500V226.500Q126.500 224.500 130 224.500Q133.500 224.500 133.500 226.500V232.500H260
    M262.500 226V234L260.500 237V240.500Q261.500 241.500 264 241.500Q266.500 241.500 266.500 239V2.500Q266.500 .500 264 .500H262
    M12.500 .500V79.500Q12 81.500 9 81.500M17.500 11V84.500H9M91.500 5.500V12.500L93.500 14.500H238.500V.500"/>
  <path class="faint" d="M17.500 10.500L91.500 5.500M238.500 .500L258 1.500M6.500 225V232M260.500 225V232"/>
  <path class="cut" d="M6 .500V222.500M261 3.500V222.500"/>
</g>`;

const swatch = {
  merge: svg`<path fill="#e8e8e8" stroke="#777" d="M8 2H20V18H8Z"/><path fill="#fff" stroke="#777" d="M5 5H17V20H5Z"/><path fill="#5cc820" stroke="#2a8010" d="M6 10H11V14H15V19H11V23H6V19H2V14H6Z"/>`,
  people: svg`<path fill="#e8f2fc" stroke="#4a80c0" d="M9 1H18L22 5V18H9Z"/><circle cx="8" cy="12" r="4" fill="#e8a888" stroke="#a85030"/><path fill="#d04020" d="M1 22Q2 15 8 16L10 22Z"/><circle cx="15" cy="14" r="4" fill="#f0c8a0" stroke="#b07040"/><path fill="#4a88d0" d="M8 23Q9 18 15 18T22 23Z"/>`,
  lock: svg`<path stroke="#9a9a9a" stroke-width="3" d="M7 12V7Q7 3 12 3T17 7V12"/><path fill="#d8a23a" stroke="#8a6010" d="M3.500 10.500H20.500V22.500H3.500Z"/><path fill="#4a3000" d="M10.500 14H13.500V19H10.500Z"/>`,
  pen: svg`<path fill="#6ea0cc" stroke="#5a7a9c" d="M23 1Q24 3 20 8L8 18L1 23L5 15L16 4Q20 0 23 1Z"/><path stroke="#cfe4f6" stroke-width="2" d="M20 4L8 16"/>`,
  form: svg`<path fill="#fff" stroke="#9a30b0" stroke-width="2" d="M4 2H20V22H4Z"/><path fill="#c070d8" stroke="#7a2a90" d="M7 7H17V10H7ZM7 14H17V17H7Z"/><path stroke="#aaa" d="M7 4.500H15M7 12H15M7 19.500H15"/>`,
  media: svg`<path fill="#333" d="M1 4H17V23H1Z"/><path fill="#6ab4e0" d="M5 5H13V12H5ZM5 14H13V22H5Z"/><path stroke="#fff" stroke-width="2" stroke-dasharray="1.500 1.500" d="M3 4V23M15 4V23"/><path fill="#f8d020" stroke="#d8a000" stroke-width=".600" d="M16 0L18 4L22 2L21 6L24 8L20 9L21 13L17 11L14 14L13 10L9 10L12 7L10 3L14 4Z"/>`,
  comment: svg`<path fill="#fff" stroke="#d04030" stroke-width="1.500" d="M9 4Q12 0 15 3Q20 0 22 5Q25 9 20 10Q18 14 14 11Q8 12 9 4Z"/><path fill="#f8cc40" stroke="#b88810" d="M2 13Q2 9 9 9T17 13T12 18L7 23V18Q2 18 2 13Z"/>`,
};

@customElement("pdf-viewer")
export class PdfViewer extends LitElement {
  static styles = css`
    :host { display: flex; flex-direction: column; box-sizing: border-box; overflow: hidden; background: #fff; color: #000;
      border-right: 1px solid #555; font: 12px/20px "Noto Sans", "Noto Sans CJK SC", sans-serif; box-shadow: 2px 0 14px rgba(0, 0, 0, 0.45); }
    button { font: inherit; color: inherit; margin: 0; padding: 0; border: 0; background: none; white-space: nowrap; }
    svg { display: block; flex: none; }
    .title { display: flex; align-items: center; height: 30px; }
    .title span { flex: 1; margin-left: -8px; white-space: nowrap; font-size: 13px; }
    .title button { width: 46px; height: 30px; display: grid; place-items: center; }
    .menu { display: flex; align-items: center; gap: 15px; height: 20px; background: #dedede; border-bottom: 1px solid #6e6e6e; }
    .menu button { height: 20px; line-height: 18px; }
    .menu button:first-child { margin-left: -17px; }
    .menu .x { margin-left: auto; margin-right: 6px; }
    .tasks { display: flex; align-items: center; gap: 12px; height: 36px; font-size: 13px; background: linear-gradient(#efefef, #d6d6d6); border-bottom: 1px solid #6e6e6e; }
    .tasks button { display: flex; align-items: center; gap: 4px; line-height: 18px; }
    .tasks button:first-child { margin-left: -3px; }
    .tools { display: flex; align-items: center; height: 36px; padding-left: 4px; font-size: 13px; background: linear-gradient(#dcdcdc, #c2c2c2); border-bottom: 2px solid #707070; }
    .cell { width: 36px; height: 32px; display: grid; place-items: center; }
    .narrow { width: 28px; }
    .zoom { width: 24px; }
    .on { width: 34px; background: #e9e9e9; border-radius: 3px; }
    .drop { width: 10px; }
    .sep { width: 12px; height: 22px; display: grid; place-items: center; }
    .sep::before { content: ""; width: 4px; height: 22px; background: radial-gradient(#888 40%, transparent 45%) 0 0 / 2px 2px; }
    .line::before { width: 1px; background: #eee; }
    input { box-sizing: border-box; height: 24px; border: 1px solid #777; background: #f4f4f4; font: inherit; padding: 0 3px; outline: 0; }
    input::placeholder { color: #777; opacity: 1; }
    .page { width: 28px; text-align: center; margin-left: 6px; background: #fff; }
    .pct { width: 46px; margin-left: 4px; background: #fff; }
    .find { width: 117px; margin-left: 2px; }
    .count { width: 25px; padding-left: 3px; }
    .doc { flex: 1; min-height: 0; display: grid; grid-template-columns: 1fr 5px 17px; }
    .sheet { overflow: hidden; background: linear-gradient(#ddd, #fff 6px); }
    .edge { background: #2e3234; }
    .scroll { display: flex; flex-direction: column; background: #f0f0f0; }
    .split { height: 7px; background: #e0e0e0; border: 1px solid #aaa; border-width: 0 1px 1px 0; }
    .scroll svg { margin: 6px auto; }
    .thumb { flex: 1; margin-top: 315px; background: #cdcdcd; }
    .ink { fill: none; stroke: #000; }
    .faint { fill: none; stroke: #aaa; }
    .cut { fill: none; stroke: #0000ff; stroke-width: 6; stroke-linecap: round; }
    .dim { fill: #f00; font: bold 7px/7px "Liberation Sans", sans-serif; }
  `;
  render() {
    const arrow = (d: string) => html`<svg width="22" height="20" viewBox="0 0 22 20"><path d=${d} fill="#a6a6a6" stroke="#8a8a8a" /></svg>`;
    const disc = (d: string) => html`<svg width="16" height="16" viewBox="0 0 16 16"><circle cx="8" cy="8" r="6" fill="#8ec0ea" stroke="#6a9ccc" /><path d=${d} stroke="#123f70" stroke-width="2" /></svg>`;
    const marks: [number, string][] = [[66, "28.75"], [321, "178.70"], [351, "15.46"], [606, "178.70"], [622, "8.59"], [877, "178.70"]];
    const tasks: [unknown, string][] = [
      [swatch.merge, "合并"], [swatch.people, "协作"], [swatch.lock, "安全"], [swatch.pen, "签名"],
      [swatch.form, "表单"], [swatch.media, "多媒体"], [swatch.comment, "注释"],
    ];
    return html`
      <div class="title">
        <span>0la0_跳V槽.pdf - Adobe Acrobat Pro</span>
        <button aria-label="Minimise"><svg width="10" height="10"><path d="M0 5.500H10" stroke="#000" /></svg></button>
        <button aria-label="Maximise"><svg width="10" height="10" fill="none"><path d="M.500 .500H9.500V9.500H.500Z" stroke="#000" /></svg></button>
        <button aria-label="Close"><svg width="10" height="10"><path d="M0 0L10 10M10 0L0 10" stroke="#000" /></svg></button>
      </div>
      <div class="menu">
        ${["编辑(E)", "视图(V)", "文档(D)", "注释(C)", "表单(R)", "工具(T)", "高级(A)", "窗口(W)", "帮助(H)"].map((m) => html`<button>${m}</button>`)}
        <button class="x" aria-label="Close document"><svg width="8" height="8"><path d="M1 1L7 7M7 1L1 7" stroke="#000" stroke-width="2" /></svg></button>
      </div>
      <div class="tasks">
        <button aria-label="Create">${caret}</button>
        ${tasks.map(([icon, label]) => html`<button><svg width="24" height="24" viewBox="0 0 24 24" fill="none">${icon}</svg>${label}${caret}</button>`)}
      </div>
      <div class="tools">
        <button class="cell" aria-label="Save"><svg width="22" height="22" viewBox="0 0 22 22" fill="none"><path fill="#b4b4b4" stroke="#8c8c8c" d="M1.500 1.500H18L20.500 4V20.500H1.500Z" /><path fill="#d8d8d8" stroke="#8c8c8c" d="M6.500 1.500H15.500V8.500H6.500ZM4.500 11.500H17.500V20.500H4.500Z" /><path stroke="#999" d="M6 14.500H16M6 17.500H16M12.500 3V7" /></svg></button>
        <button class="cell" aria-label="Mail"><svg width="26" height="20" viewBox="0 0 26 20" fill="none"><path fill="#eef6fd" stroke="#4a80b4" d="M.500 1.500H25.500V18.500H.500Z" /><path fill="#2a68b0" d="M19 4H23V8H19Z" /><path stroke="#8aa" d="M3 5.500H8M3 7.500H8M10 11.500H17M10 13.500H17" /></svg></button>
        <button class="cell" aria-label="Share online"><svg width="24" height="24" viewBox="0 0 24 24"><circle cx="14.500" cy="10" r="9" fill="#6aa4d8" stroke="#2a5a94" /><path fill="#d0e4f4" d="M9 4Q14 0 18 4L15 9L10 8ZM17 12L21 9L20 15Z" /><path fill="#48c018" stroke="#247808" d="M8 8L14.500 15.500H11V22.500H5V15.500H1.500Z" /></svg></button>
        <span class="sep"></span>
        <button class="cell narrow" aria-label="Previous page">${arrow("M11 1L20 11H14.500V18.500H7.500V11H2Z")}</button>
        <button class="cell narrow" aria-label="Next page">${arrow("M11 19L20 9H14.500V1.500H7.500V9H2Z")}</button>
        <input class="page" aria-label="Page" value="1" /><span class="count">/ 1</span>
        <span class="sep"></span>
        <button class="cell on" aria-label="Select tool"><svg width="20" height="20" viewBox="0 0 20 20" fill="none"><path stroke="#222" stroke-width="1.500" d="M1 4.500H3L4 5.500L5 4.500H7M4 5V15M1 15.500H3L4 14.500L5 15.500H7" /><path fill="#333" d="M9 2L18 11H13.500L16 16L14 17L11.500 12L9 15Z" /></svg></button>
        <button class="cell" aria-label="Hand tool"><svg width="22" height="22" viewBox="0 0 22 22"><path fill="#fff" stroke="#666" d="M7 21Q2 16 1 11Q2 9 5 12L4 5Q5 3 6.500 5L8 10V3Q9 .500 10.500 3L11 9.500L13 3Q14.500 1 15.500 3.500L14.500 10L18 5.500Q20 5 20 7Q18 12 17 16Q16 19 15 21Z" /></svg></button>
        <button class="cell" aria-label="Marquee zoom"><svg width="22" height="22" viewBox="0 0 22 22" fill="none"><circle cx="8" cy="8" r="6.500" fill="#a4ccec" stroke="#5a90c0" stroke-width="2" /><path stroke="#555" stroke-width="3" d="M13 13L20 20" /><path stroke="#333" stroke-dasharray="2 2" d="M9.500 3.500H20.500V10.500H9.500Z" /></svg></button>
        <span class="sep line"></span>
        <button class="cell zoom" aria-label="Zoom out">${disc("M5 8H11")}</button>
        <button class="cell zoom" aria-label="Zoom in">${disc("M5 8H11M8 5V11")}</button>
        <input class="pct" aria-label="Zoom" value="28.1%" />
        <button class="cell drop" aria-label="Zoom levels">${caret}</button>
        <span class="sep"></span>
        <button class="cell on" aria-label="Fit width"><svg width="16" height="20" viewBox="0 0 16 20"><path fill="#f0f8ff" stroke="#4a88b8" d="M.500 .500H15.500V7.500H.500ZM.500 10.500H15.500V19.500H.500Z" /><path d="M2 15H14M5 12.500L2 15L5 17.500M11 12.500L14 15L11 17.500" fill="none" stroke="#2a6ca8" /></svg></button>
        <button class="cell" aria-label="Fit page"><svg width="16" height="20" viewBox="0 0 16 20"><path fill="#e0f0fc" stroke="#4a88b8" d="M.500 .500H15.500V19.500H.500Z" /><path d="M8 2V7M6 4L8 2L10 4M8 13V18M6 16L8 18L10 16M2 10H6M4 8L2 10L4 12M10 10H14M12 8L14 10L12 12" fill="none" stroke="#2a6ca8" /></svg></button>
        <span class="sep"></span>
        <input class="find" aria-label="Find" placeholder="查找" />
        <button class="cell drop" aria-label="Find options">${caret}</button>
      </div>
      <div class="doc">
        <div class="sheet">
          <svg width="992" height="777" viewBox="0 0 992 777">
            ${rows.map((y) => columns.map((x) => board(x, y)))}
            <path class="ink" d="M331.500 0V188.500H341.500V0M331.500 193.500H341.500V416.500H331.500ZM977.500 0V777" />
            ${marks.map(([x]) => svg`<path class="cut" d="M${x} 673.500V680.500"/>`)}
            ${marks.map(([x, label]) => svg`<text class="dim" transform="translate(${x + 1} 677) rotate(90)">${label}</text>`)}
            <text class="dim" x="-2" y="738">X=0 Y=0</text>
            <text class="dim" x="950" y="732">=590.70</text>
            <circle cx="950" cy="733" r="3" fill="#f00" />
          </svg>
        </div>
        <div class="edge"></div>
        <div class="scroll">
          <div class="split"></div>
          <svg width="9" height="6" fill="none"><path d="M.500 5.500L4.500 1.500L8.500 5.500" stroke="#555" stroke-width="2" /></svg>
          <div class="thumb"></div>
        </div>
      </div>
    `;
  }
}

/* ---------- Desktop ---------- */

const menus: [string, string, string][] = [
  ["", "F", "ile"], ["", "E", "dit"], ["", "A", "ctions"], ["O", "p", "tions"], ["Analysis", "", ""],
  ["DFM", "", ""], ["", "S", "tep"], ["", "R", "out"], ["", "W", "indows"],
];

@customElement("app-root")
export class AppRoot extends LitElement {
  static styles = css`
    :host { display: grid; grid-template: 53px minmax(0, 1fr) / minmax(0, 1fr) 162px; height: 100vh; overflow: hidden; background: #000; color: #000; }
    .bar { grid-column: 1 / -1; display: grid; grid-template-columns: 1fr 412px; background: #c4f2f0; }
    .menus, .brand { box-sizing: border-box; height: 51px; margin-top: 1px; background: #9adada; }
    .menus { display: flex; align-items: center; gap: 17px; padding: 0 14px 2px 0; border-right: 3px solid #55908e; border-bottom: 2px solid #55807e; margin-right: 2px; }
    .menus button { margin: 0; padding: 0; border: 0; background: none; color: #000; font: bold 14px/20px "Liberation Serif", serif; }
    .menus button:first-child { margin-left: -8px; }
    .menus .help { margin-left: auto; }
    .menus u { text-underline-offset: 4px; }
    .brand { display: flex; border-left: 2px solid #55908e; padding-left: 4px; margin-bottom: 1px; }
    .logo { display: flex; align-items: center; align-self: center; height: 32px; padding-bottom: 4px; color: #0a0a80; font: italic bold 32px/32px "Liberation Sans", sans-serif; }
    .logo svg { display: block; }
    .product { margin-left: 3px; text-align: center; width: 138px; font: italic bold 15px/22px "Liberation Serif", serif; }
    .product b { display: block; font: bold 24px/27px "Liberation Serif", serif; white-space: nowrap; }
    .clock { flex: 1; text-align: center; padding-top: 1px; font: italic bold 15px/16px "Liberation Mono", monospace; }
    .canvas { position: relative; overflow: hidden; min-width: 0; }
    .job { width: 129px; margin-top: 1px; border: 2px solid #4fb89a; border-left: 0; background: #9adada; font: bold 15px/19px "Liberation Mono", monospace; white-space: pre; }
    .job div { height: 18px; border: 1px solid #000; border-left: 0; }
    .trace { position: absolute; left: 1014px; top: 37px; }
    file-manager { position: absolute; left: 1014px; top: 131px; width: 583px; height: 793px; }
    pdf-viewer { position: absolute; left: 0; top: 35px; bottom: 0; width: 1015px; }
    .pointer { position: absolute; left: 1129px; top: 610px; }
  `;
  render() {
    const cells = [66, 80, 96, 112, 128, 142];
    return html`
      <header class="bar">
        <nav class="menus">
          ${menus.map(([a, u, b]) => html`<button>${a}${u ? html`<u>${u}</u>` : ""}${b}</button>`)}
          <button class="help">Help</button>
        </nav>
        <div class="brand">
          <div class="logo" aria-label="Frontline">
            <svg width="22" height="26" viewBox="0 0 22 26"><path fill="#e82010" d="M2 4L8 2H22L21 6H8ZM1 10L7 8H20L19 12H7ZM0 16L5 14H18L17 18H6ZM0 22L6 20H17L16 24H4Z" /></svg>
            <span>Fr</span>
            <svg width="20" height="22" viewBox="0 0 20 22"><circle cx="10" cy="13" r="8.500" fill="#b8e8e8" stroke="#0a0a80" /><path fill="#e82010" d="M10 9L14 13L10 17L6 13Z" /></svg>
            <span>ntline</span>
          </div>
          <div class="product"><b>Genesis 2000</b>Graphic Editor</div>
          <div class="clock">22 Jun 2022<br />04:08 PM</div>
        </div>
      </header>
      <main class="canvas">
        <div class="job"><div>b : as97g00la0</div><div>en: cam</div></div>
        <svg class="trace" width="436" height="100" viewBox="0 0 1308 300" fill="none">
          <g stroke="#5a8c2a" stroke-width="5">
            <path d="M0 204H936L948 192V56H990L1160 66Q1180 72 1182 96L1190 104H1206L1211 98V54H1232L1240 62V290M1181 80V290" />
            <circle cx="1001" cy="133" r="14" fill="#d07858" stroke-width="7" />
            <circle cx="1058" cy="133" r="14" fill="#d07858" stroke-width="7" />
          </g>
          <path d="M974 290V150H958V109H1076L1098 136V150H1081V290" stroke="#d01818" stroke-width="3" />
          ${cells.map((y) => svg`<path fill="#58b8f0" d="M983 ${y + 90}H1009V${y + 103}H983ZM1049 ${y + 90}H1075V${y + 103}H1049Z"/>`)}
          <path fill="#2a8a60" d="M983 205H1009V217H983ZM1049 205H1075V217H1049Z" />
          <g stroke="#1030e0" stroke-width="4">
            <path d="M971 162H983M1009 162H1022M971 177H983M1009 177H1022M1034 162H1049M1075 162H1086M1034 177H1049M1075 177H1086M1009 225H1020M1009 240H1020M1075 225H1086M1075 240H1086M980 198H958L922 237H856V252L834 270M980 205H962L926 242H860M876 236Q884 220 892 236M896 236Q904 220 912 236M856 250L868 270" />
          </g>
          <path fill="#0022ff" d="M1194 120L1228 106V290H1194Z" />
          <path fill="#60b8f0" d="M826 274H840V290H826ZM844 274H858V290H844ZM862 274H876V290H862Z" />
          <g fill="#fff" stroke="#2040e0" stroke-width="3"><circle cx="972" cy="162" r="4" /><circle cx="972" cy="177" r="4" /><circle cx="1018" cy="162" r="4" /><circle cx="1018" cy="177" r="4" /><circle cx="1038" cy="162" r="4" /><circle cx="1038" cy="177" r="4" /><circle cx="1084" cy="162" r="4" /><circle cx="1084" cy="177" r="4" /><circle cx="1018" cy="225" r="4" /><circle cx="1018" cy="240" r="4" /><circle cx="1084" cy="225" r="4" /><circle cx="1084" cy="240" r="4" /><circle cx="969" cy="196" r="4" /><circle cx="966" cy="222" r="4" /><circle cx="852" cy="265" r="4" /></g>
          <circle cx="834" cy="263" r="6" fill="#e01840" />
        </svg>
        <file-manager></file-manager>
        <pdf-viewer></pdf-viewer>
        <svg class="pointer" width="60" height="140" viewBox="0 0 60 140"><path fill="#f00" d="M3 1L6 0L47 109L56 106L54 134L37 111L42 110Z" /></svg>
      </main>
      <tool-palette></tool-palette>
    `;
  }
}
